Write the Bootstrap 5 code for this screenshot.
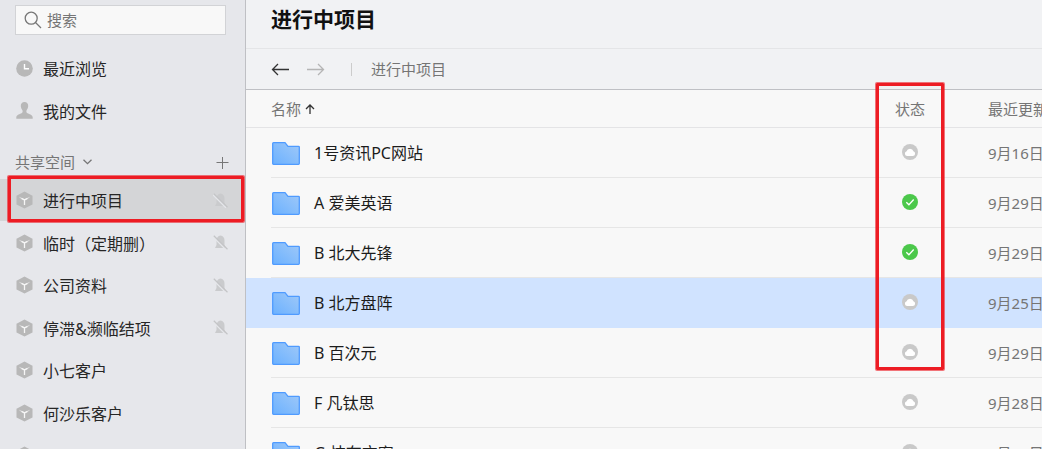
<!DOCTYPE html>
<html lang="zh-CN">
<head>
<meta charset="utf-8">
<meta name="viewport" content="width=device-width, initial-scale=1">
<title>进行中项目</title>
<link href="https://cdn.jsdelivr.net/npm/bootstrap@5.3.0/dist/css/bootstrap.min.css" rel="stylesheet">
<style>
body{font-family:"Noto Sans","Noto Sans CJK SC",sans-serif;font-size:16px;line-height:24px;color:#262626;background:#f8f8f8}
.side{width:246px;background:#e6e7eb;border-right:1px solid #bfc0c4}
.search{height:30px;margin:5px 19px 0 15px;border:1px solid #d2d3d6;background:#f8f8f8;padding-left:8px;gap:5px}
.search input{font-size:15px;line-height:20px;color:#757575;background:none;outline:0}
.search input::placeholder{color:#757575;opacity:1}
.rows{display:grid;grid-auto-rows:42px 43px}
.quick{margin-top:12px}
.rows a{color:#262626;text-decoration:none;padding:2px 17px 0 16px;gap:10px}
.rows a svg{margin-top:-2px}
.rows .on{background:#d4d5d7}
.frame{border:3px solid #ed1c24;border-radius:1px;box-shadow:0 0 0 1px #ed1c2499;pointer-events:none}
.frame-space{top:-3px;bottom:-1px;left:8px;right:1px}
.frame-status{top:-7px;left:0;right:0;width:68px;height:287px;margin:0 auto}
.muted{color:#757575;font-size:15px}
.spaces{height:30px;margin-top:14px;margin-bottom:3px;padding:2px 16px 0 15px}
.plain{border:0;background:none;padding:0;color:inherit;line-height:inherit}
.top{background:#f1f2f4;border-bottom:1px solid #bfc0c4}
.top h1{font-size:21px;line-height:30px;font-weight:700;color:#111;height:49px;padding:4px 25px 0;margin:0;border-bottom:1px solid #e4e5e7}
.crumbs{height:40px;padding:0 25px}
.divide{width:1px;height:13px;background:#ccc;margin:0 19px 0 26px}
.files{table-layout:fixed;width:100%;border-collapse:separate;border-spacing:0}
.files td,.files th{padding:0;font-weight:400;vertical-align:middle;white-space:nowrap}
.files th{height:38px;border-bottom:1px solid #e4e4e6}
.files td{height:50px;background:linear-gradient(#e6e6e6,#e6e6e6) no-repeat 0 100%/100% 1px}
.files td:first-child{padding-left:26px;background-position:25px 100%}
.files th:first-child{padding-left:25px}
.files .picked td{background:#d0e3ff}
.fname{color:#1c1c1c;padding-left:14px}
.state{padding-bottom:2px}
.c-status{width:156px}
.c-date{width:54px}
</style>
<script src="https://cdn.jsdelivr.net/npm/bootstrap@5.3.0/dist/js/bootstrap.bundle.min.js"></script>
</head>
<body>
<svg width="0" height="0" class="position-absolute" aria-hidden="true">
<defs>
<linearGradient id="fold" x1="0" y1="1" x2="1" y2="0"><stop offset="0" stop-color="#6bb1ff"/><stop offset="1" stop-color="#a0c9f8"/></linearGradient>
<symbol id="folder" viewBox="0 0 28 23"><path d="M1.700 .7H13l3 3.600h10.500q.8 0 .8.800v16.400q0 .8-.8.800h-25q-.8 0-.8-.8V1.500q0-.8.8-.8z" fill="url(#fold)" stroke="#4f9bff" stroke-width="1.300"/></symbol>
<symbol id="cube" viewBox="0 0 17 18"><path d="M8.500 .5 16.500 4.800v8.600l-8 4.200-8-4.200V4.800z" fill="#b8b8b8"/><path d="M3.500 6.300l5 2.600 5-2.600" fill="none" stroke="#dcdcdd" stroke-width="1"/><path d="M5.500 7.400l3 1.500 3-1.500M8.500 8.900v5" fill="none" stroke="#f6f6f6" stroke-width="1.300"/></symbol>
<symbol id="mute" viewBox="0 0 15 15"><path d="M7.500 .5q4 .8 4 5v4.500l1.500 3H2l1.500-3V5.500q0-4.200 4-5z" fill="#cacbcd"/><path d="M0 1.800 13 14.800" stroke="#e6e7eb" stroke-width="1.300"/><path d="M.8 .8 14.500 14.200" stroke="#c4c5c7" stroke-width="1.200"/></symbol>
<symbol id="cloud" viewBox="0 0 16 16"><circle cx="8" cy="8" r="8" fill="#c9c9c9"/><path d="M5.200 12a2.400 2.400 0 0 1-.6-4.700 3.500 3.500 0 0 1 6.800 0A2.400 2.400 0 0 1 10.800 12z" fill="#fff"/></symbol>
<symbol id="done" viewBox="0 0 16 16"><circle cx="8" cy="8" r="8" fill="#4cc84b"/><path d="M4.300 8.200l2.600 2.500 4.800-5.200" fill="none" stroke="#fff" stroke-width="1.300"/></symbol>
</defs>
</svg>
<div class="d-flex vh-100 overflow-hidden">
<aside class="side flex-shrink-0">
<label class="search d-flex align-items-center">
<svg width="18" height="18" viewBox="0 0 18 18" fill="none" stroke="#777" stroke-width="1.300" class="flex-shrink-0"><circle cx="7.200" cy="7.200" r="6"/><path d="M11.500 11.500l5.500 5.500"/></svg>
<input type="text" class="border-0 p-0 w-100" placeholder="搜索" aria-label="搜索">
</label>
<nav class="rows quick">
<a href="#" class="d-flex align-items-center"><svg width="17" height="17" viewBox="0 0 17 17"><circle cx="8.500" cy="8.500" r="8.300" fill="#b8b8b8"/><path d="M8.500 4v4.700H13" fill="none" stroke="#fff" stroke-width="1.400"/></svg><span>最近浏览</span></a>
<a href="#" class="d-flex align-items-center"><svg width="17" height="17" viewBox="0 0 17 17"><path d="M8.500 0c2.400 0 3.900 1.700 3.700 4.300-.2 2-1 3.100-1.700 4.100-.5 1.700.3 2.500 1.500 3 2.300.9 4.700 1.500 4.700 4.100v1.200H.3v-1.200c0-2.600 2.400-3.200 4.700-4.100 1.200-.5 2-1.300 1.500-3-.7-1-1.500-2.100-1.700-4.100C4.600 1.700 6.100 0 8.500 0z" fill="#b8b8b8"/></svg><span>我的文件</span></a>
</nav>
<div class="spaces muted d-flex align-items-center justify-content-between">
<button type="button" class="plain d-flex align-items-center gap-2">共享空间<svg width="9" height="6" viewBox="0 0 9 6" fill="none" stroke="#757575" stroke-width="1.300"><path d="M.5 .7l4 4 4-4"/></svg></button>
<button type="button" class="plain d-flex" aria-label="新建空间"><svg width="13" height="13" viewBox="0 0 13 13" stroke="#777"><path d="M6.500 1v12M.5 6.500h12"/></svg></button>
</div>
<nav class="rows" id="spaces"></nav>
</aside>
<main class="flex-grow-1 overflow-hidden">
<header class="top">
<h1>进行中项目</h1>
<div class="crumbs muted d-flex align-items-center">
<button type="button" class="plain d-flex" aria-label="后退"><svg width="19" height="13" viewBox="0 0 19 13" fill="none" stroke="#333" stroke-width="1.300"><path d="M18 6.500H1.500M7 1 1.500 6.500 7 12"/></svg></button>
<button type="button" class="plain d-flex ms-3" aria-label="前进"><svg width="19" height="13" viewBox="0 0 19 13" fill="none" stroke="#b5b5b5" stroke-width="1.300"><path d="M1 6.500h16.500M12 1l5.500 5.500L12 12"/></svg></button>
<span class="divide"></span><span>进行中项目</span>
</div>
</header>
<table class="files">
<colgroup><col><col class="c-status"><col class="c-date"></colgroup>
<thead><tr class="muted">
<th scope="col"><div class="d-flex align-items-center gap-1">名称<svg width="10" height="10" viewBox="0 0 10 10" fill="none" stroke="#333" stroke-width="1.300"><path d="M5 10V1M1 5l4-4 4 4"/></svg></div></th>
<th scope="col" class="text-center position-relative">状态<span class="frame frame-status position-absolute"></span></th>
<th scope="col">最近更新</th>
</tr></thead>
<tbody id="files"></tbody>
</table>
</main>
</div>
<script>
const icon=(id,w,h,cls='')=>`<svg width="${w}" height="${h}" class="flex-shrink-0 ${cls}" aria-hidden="true"><use href="#${id}"/></svg>`;
const spaces=[['进行中项目',1],['临时（定期删）',1],['公司资料',1],['停滞&amp;濒临结项',1],['小七客户',0],['何沙乐客户',0],['',0]];
document.getElementById('spaces').innerHTML=spaces.map(([n,m],i)=>`<a href="#" class="d-flex align-items-center position-relative ${i?'':'on'}">${icon('cube',17,18)}<span class="flex-grow-1">${n}</span>${m?icon('mute',15,15):''}${i?'':'<span class="frame frame-space position-absolute"></span>'}</a>`).join('');
const files=[['1号资讯PC网站','cloud','9月16日'],['A 爱美英语','done','9月29日'],['B 北大先锋','done','9月29日'],['B 北方盘阵','cloud','9月25日'],['B 百次元','cloud','9月29日'],['F 凡钛思','cloud','9月28日'],['G 桔布方案','cloud','9月24日']];
document.getElementById('files').innerHTML=files.map(([n,s,d],i)=>`<tr class="${i==3?'picked':''}"><td><div class="d-flex align-items-center">${icon('folder',28,23)}<span class="fname">${n}</span></div></td><td><div class="state">${icon(s,16,16,'d-block mx-auto')}</div></td><td class="muted">${d}</td></tr>`).join('');
</script>
</body>
</html>
